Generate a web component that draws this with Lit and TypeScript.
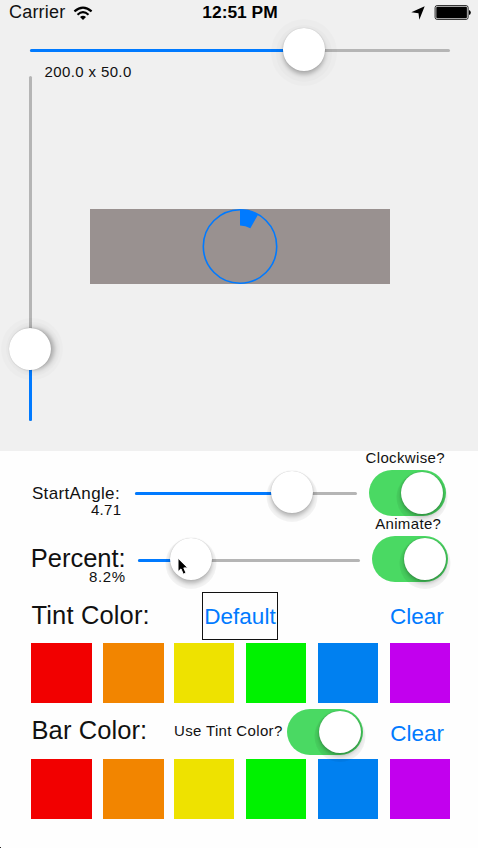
import { LitElement, html, css, svg } from "lit";
import { customElement, property } from "lit/decorators.js";
import { classMap } from "lit/directives/class-map.js";

@customElement("ios-slider")
class IosSlider extends LitElement {
  @property({ type: Number }) length = 222;
  @property({ type: Number }) value = 0;
  @property({ type: Boolean, reflect: true }) vertical = false;
  @property({ type: Boolean, reflect: true }) soft = false;

  static styles = css`
    :host {
      display: block;
    }
    .track {
      position: relative;
      height: 3px;
      border-radius: 1.5px;
      background: #b5b5b5;
    }
    .fill {
      height: 3px;
      border-radius: 1.5px;
      background: #007aff;
    }
    .thumb {
      position: absolute;
      top: -21.2px;
      width: 42.4px;
      height: 42.4px;
      margin-left: -21.2px;
      border-radius: 50%;
      background: #fff;
      box-shadow: 0 0 1px rgba(0, 0, 0, 0.25), 0 3.5px 4px rgba(0, 0, 0, 0.25),
        0 4.5px 0 4.5px rgba(0, 0, 0, 0.045);
    }
    .soft .thumb {
      box-shadow: 0 0 1px rgba(0, 0, 0, 0.25), 0 3.5px 4px rgba(0, 0, 0, 0.25),
        0 4px 0 7px rgba(0, 0, 0, 0.015), 0 3px 0 12px rgba(0, 0, 0, 0.014);
    }
    .vertical {
      width: 3px;
      height: 100%;
      display: flex;
      flex-direction: column;
      justify-content: flex-end;
    }
    .vertical .fill {
      width: 3px;
      height: auto;
    }
    .vertical .thumb {
      top: auto;
      left: 0.3px;
      margin-left: -20.7px;
      margin-bottom: -21.2px;
      box-shadow: 0 0 1px rgba(0, 0, 0, 0.25), 3.5px 0 4px rgba(0, 0, 0, 0.25),
        3px 0 0 6px rgba(0, 0, 0, 0.015), 2px 0 0 10px rgba(0, 0, 0, 0.014);
    }
  `;

  render() {
    const size = this.vertical ? `height:${this.length}px` : `width:${this.length}px`;
    const fill = this.vertical ? `height:${this.value}px` : `width:${this.value}px`;
    const at = this.vertical ? `bottom:${this.value}px` : `left:${this.value}px`;
    return html`<div class=${classMap({ track: true, vertical: this.vertical, soft: this.soft })} style=${size}>
      <div class="fill" style=${fill}></div>
      <div class="thumb" style=${at}></div>
    </div>`;
  }
}

@customElement("ios-switch")
class IosSwitch extends LitElement {
  static styles = css`
    :host {
      display: block;
      width: 76.5px;
      height: 46.5px;
    }
    .body {
      position: relative;
      height: 100%;
      border-radius: 23.25px;
      background: #4ad963;
    }
    .knob {
      position: absolute;
      right: 2.2px;
      top: 2.2px;
      width: 42.2px;
      height: 42.2px;
      border-radius: 50%;
      background: #fff;
      box-shadow: 0 0 1.5px rgba(0, 0, 0, 0.25), 0 3px 4px rgba(0, 0, 0, 0.25),
        0 4.5px 0 4.5px rgba(0, 0, 0, 0.05);
    }
  `;

  render() {
    return html`<div class="body"><div class="knob"></div></div>`;
  }
}

const SWATCHES = ["#f20000", "#f28500", "#eee200", "#00f200", "#0080f0", "#c200ee"];

@customElement("app-root")
class AppRoot extends LitElement {
  static styles = css`
    :host {
      display: block;
      width: 478px;
      height: 848px;
      overflow: hidden;
      position: relative;
      background: #fefefe;
      color: #111;
      font-family: "Liberation Sans", Arial, sans-serif;
      white-space: nowrap;
    }
    .preview {
      height: 451px;
      background: #f0f0f0;
      display: flex;
      flex-direction: column;
    }
    .status {
      height: 25px;
      display: grid;
      grid-template-columns: 1fr auto 1fr;
      align-items: center;
      padding: 0 7px 0 9px;
      font-size: 18px;
      line-height: 25px;
    }
    .carrier {
      display: flex;
      align-items: center;
      gap: 8px;
      letter-spacing: 0.2px;
    }
    .time {
      font-weight: bold;
      font-size: 17.4px;
      color: #000;
    }
    .right {
      display: flex;
      align-items: center;
      justify-content: flex-end;
      gap: 9px;
    }
    svg {
      display: block;
    }
    .width-slider {
      margin: 24.4px 0 0 30px;
    }
    .size {
      font-size: 15px;
      letter-spacing: 0.38px;
      line-height: 20px;
      margin: 10px 0 0 44.5px;
    }
    .stage {
      display: flex;
      align-items: flex-start;
      margin-top: -6.4px;
      padding-left: 29px;
    }
    .canvas {
      width: 300px;
      height: 75px;
      margin: 133px 0 0 58px;
      background: #999190;
      display: flex;
      justify-content: center;
    }
    .row {
      display: flex;
      align-items: flex-start;
    }
    .labels {
      display: flex;
      flex-direction: column;
      align-items: flex-end;
    }
    .start {
      width: 121.5px;
      padding-top: 33px;
    }
    .start .small {
      margin-top: -1px;
    }
    .percent {
      width: 125.7px;
      padding-top: 26px;
    }
    .percent .small {
      margin-top: -3px;
      letter-spacing: 0.6px;
    }
    .name {
      font-size: 17px;
      line-height: 20px;
      letter-spacing: 0.36px;
      margin-right: 1.5px;
    }
    .big {
      font-size: 25.5px;
      line-height: 30px;
    }
    .small {
      font-size: 15px;
      line-height: 14px;
      letter-spacing: 0.35px;
    }
    .toggle {
      display: flex;
      flex-direction: column;
      align-items: center;
    }
    .row-angle {
      height: 66px;
    }
    .row-angle ios-slider {
      margin: 41px 0 0 13.5px;
    }
    .toggle {
      margin-left: 12px;
    }
    .small.cap {
      height: 18.5px;
      margin-left: -4px;
    }
    .row-percent {
      height: 75px;
    }
    .row-percent ios-slider {
      margin: 41.7px 0 0 12.3px;
    }
    .cursor {
      position: absolute;
      left: 177px;
      top: 557px;
    }
    .tint {
      height: 51.4px;
      padding-left: 31.5px;
    }
    .tint .big {
      width: 170.5px;
      margin-top: 8px;
      letter-spacing: 0.15px;
    }
    .link {
      color: #007aff;
      font-size: 22.5px;
      line-height: 26px;
    }
    .default {
      box-sizing: border-box;
      width: 76px;
      height: 47.5px;
      border: 1.5px solid #111;
      line-height: 47px;
      text-align: center;
    }
    .tint .clear {
      margin: 12px 0 0 112px;
    }
    .swatches {
      display: grid;
      grid-template-columns: 72px 71px 72px 72px 72px 60px;
      padding-left: 31px;
    }
    .swatch {
      width: 60px;
      height: 60px;
    }
    .swatch:nth-child(-n + 2) {
      width: 60.6px;
    }
    .bar {
      height: 55.6px;
      padding-left: 31.5px;
    }
    .bar .big {
      width: 142.5px;
      margin-top: 12px;
      letter-spacing: 0.1px;
    }
    .bar .small {
      width: 112.7px;
      margin-top: 21px;
    }
    .bar ios-switch {
      margin-top: 5.2px;
      position: relative;
    }
    .bar .clear {
      margin: 17.5px 0 0 27px;
    }
    .corner {
      position: absolute;
      left: 0;
      bottom: 0;
      width: 1px;
      height: 1px;
      background: #222;
    }
  `;

  private swatches() {
    return html`<div class="swatches">
      ${SWATCHES.map((c) => html`<div class="swatch" style="background:${c}"></div>`)}
    </div>`;
  }

  private progress() {
    // Wedge covers 8.2% of the turn, clockwise from twelve o'clock.
    const a = 0.082 * 2 * Math.PI;
    const pt = (r: number) => `${38 + r * Math.sin(a)} ${37.5 - r * Math.cos(a)}`;
    return html`<svg width="76" height="75" viewBox="0 0 76 75">
      ${svg`<circle cx="38" cy="37.5" r="36.7" fill="none" stroke="#007aff" stroke-width="1.6"/>
      <path fill="#007aff" d="M38 .7A36.8 36.8 0 0 1 ${pt(36.8)}L${pt(21)}A21 21 0 0 0 38 16.5Z"/>`}
    </svg>`;
  }

  render() {
    return html`
      <div class="preview">
        <div class="status">
          <div class="carrier">
            <span>Carrier</span>
            <svg width="20" height="14" viewBox="0 0 20 14">
              <g fill="none" stroke="#000" stroke-width="2.1">
                <path d="M1.4 5.4Q10 -2.3 18.6 5.4" />
                <path d="M4.5 8.7Q10 3.7 15.5 8.7" />
              </g>
              <path d="M7 11Q10 8.4 13 11L10 13.9Z" />
            </svg>
          </div>
          <div class="time">12:51 PM</div>
          <div class="right">
            <svg width="14" height="14" viewBox="0 0 14 14">
              <path d="M13.7 .3L8.3 13.8L7.5 7.2L.3 6.2Z" />
            </svg>
            <svg width="37" height="15" viewBox="0 0 37 15">
              <rect x="1.1" y=".6" width="33" height="13.8" rx="2" fill="none" stroke="#222" stroke-width="1" />
              <rect x="2.3" y="1.8" width="30.6" height="11.4" rx="1" />
              <path d="M35 4.9Q36.8 5.5 36.8 7.5T35 10.1Z" />
            </svg>
          </div>
        </div>
        <ios-slider class="width-slider" soft .length=${420} .value=${273.8}></ios-slider>
        <div class="size">200.0 x 50.0</div>
        <div class="stage">
          <ios-slider vertical .length=${344.5} .value=${71.3}></ios-slider>
          <div class="canvas">${this.progress()}</div>
        </div>
      </div>

      <div class="row row-angle">
        <div class="labels start">
          <div class="name">StartAngle:</div>
          <div class="small">4.71</div>
        </div>
        <ios-slider .length=${222} .value=${156.8}></ios-slider>
        <div class="toggle">
          <div class="small cap">Clockwise?</div>
          <ios-switch></ios-switch>
        </div>
      </div>
      <div class="row row-percent">
        <div class="labels percent">
          <div class="big">Percent:</div>
          <div class="small">8.2%</div>
        </div>
        <ios-slider .length=${222} .value=${53}></ios-slider>
        <div class="toggle">
          <div class="small cap">Animate?</div>
          <ios-switch></ios-switch>
        </div>
      </div>

      <div class="row tint">
        <div class="big">Tint Color:</div>
        <div class="link default">Default</div>
        <div class="link clear">Clear</div>
      </div>
      ${this.swatches()}
      <div class="row bar">
        <div class="big">Bar Color:</div>
        <div class="small">Use Tint Color?</div>
        <ios-switch></ios-switch>
        <div class="link clear">Clear</div>
      </div>
      ${this.swatches()}

      <svg class="cursor" width="13" height="20" viewBox="0 0 13 20">
        <path
          d="M1 1.2V14.6L4 11.9L6.3 17.2L9 16L6.8 10.9H10.8Z"
          fill="#000"
          stroke="#fff"
          stroke-width="1"
        />
      </svg>
      <div class="corner"></div>
    `;
  }
}
